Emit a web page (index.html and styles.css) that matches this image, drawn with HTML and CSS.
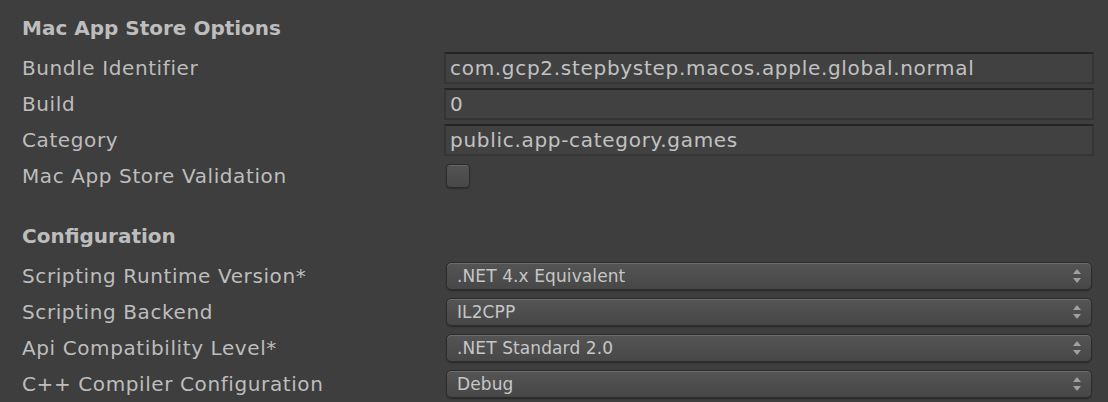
FILE: index.html
```html
<!DOCTYPE html>
<html lang="en">
<head>
  <meta charset="UTF-8">
  <title>Player Settings</title>
  <link rel="stylesheet" href="styles.css">
</head>
<body>

<div class="panel">
  <div class="section">
    <div class="section-title">Mac App Store Options</div>
    <div class="row">
      <span class="label">Bundle Identifier</span>
      <div class="text-field">com.gcp2.stepbystep.macos.apple.global.normal</div>
    </div>
    <div class="row">
      <span class="label">Build</span>
      <div class="text-field">0</div>
    </div>
    <div class="row">
      <span class="label">Category</span>
      <div class="text-field">public.app-category.games</div>
    </div>
    <div class="row">
      <span class="label">Mac App Store Validation</span>
      <div class="checkbox"></div>
    </div>
  </div>

  <div class="section">
    <div class="section-title">Configuration</div>
    <div class="row">
      <span class="label">Scripting Runtime Version*</span>
      <div class="popup"><span>.NET 4.x Equivalent</span><i class="arrows"></i></div>
    </div>
    <div class="row">
      <span class="label">Scripting Backend</span>
      <div class="popup"><span>IL2CPP</span><i class="arrows"></i></div>
    </div>
    <div class="row">
      <span class="label">Api Compatibility Level*</span>
      <div class="popup"><span>.NET Standard 2.0</span><i class="arrows"></i></div>
    </div>
    <div class="row">
      <span class="label">C++ Compiler Configuration</span>
      <div class="popup"><span>Debug</span><i class="arrows"></i></div>
    </div>
  </div>
</div>

</body>
</html>
```

FILE: styles.css
```css
html, body {
  margin: 0;
  height: 100%;
  background-color: #3e3e3e;
  overflow: hidden;
}

.panel {
  padding: 8px 14px 0 22px;
  font-family: "DejaVu Sans", "Liberation Sans", sans-serif;
  color: #bdbdbd;
}

.section + .section {
  margin-top: 22px;
}

.section-title {
  height: 40px;
  line-height: 40px;
  margin-bottom: 2px;
  font-size: 20px;
  font-weight: bold;
}

.row {
  display: flex;
  align-items: center;
  height: 36px;
}

.label {
  width: 422px;
  flex: none;
  font-size: 20px;
  letter-spacing: 0.6px;
  white-space: nowrap;
}

.text-field {
  box-sizing: border-box;
  width: 650px;
  height: 32px;
  line-height: 28px;
  padding: 0 4px;
  background-color: #414141;
  border: 2px solid #353535;
  border-top-color: #252525;
  font-size: 20px;
  letter-spacing: 0.7px;
  color: #c2c2c2;
  white-space: nowrap;
}

.checkbox {
  box-sizing: border-box;
  width: 24px;
  height: 24px;
  margin-left: 2px;
  border: 1px solid #2b2b2b;
  border-radius: 4px;
  background: linear-gradient(#545454, #474747);
  box-shadow: inset 0 1px 0 #676767, 0 1px 1px #2e2e2e;
}

.popup {
  box-sizing: border-box;
  display: flex;
  align-items: center;
  justify-content: space-between;
  width: 646px;
  height: 28px;
  margin-left: 2px;
  padding: 0 10px 0 10px;
  border: 1px solid #2c2c2c;
  border-radius: 5px;
  background: linear-gradient(#545454, #474747);
  box-shadow: inset 0 1px 0 #6c6c6c, 0 1px 1px #2a2a2a;
  font-size: 17px;
  letter-spacing: 0.1px;
  color: #c6c6c6;
}

.arrows {
  position: relative;
  width: 8px;
  height: 14px;
}

.arrows::before,
.arrows::after {
  content: "";
  position: absolute;
  left: 0;
  border-left: 4px solid transparent;
  border-right: 4px solid transparent;
}

.arrows::before {
  top: 0;
  border-bottom: 5px solid #a0a0a0;
}

.arrows::after {
  bottom: 0;
  border-top: 5px solid #a0a0a0;
}
```
